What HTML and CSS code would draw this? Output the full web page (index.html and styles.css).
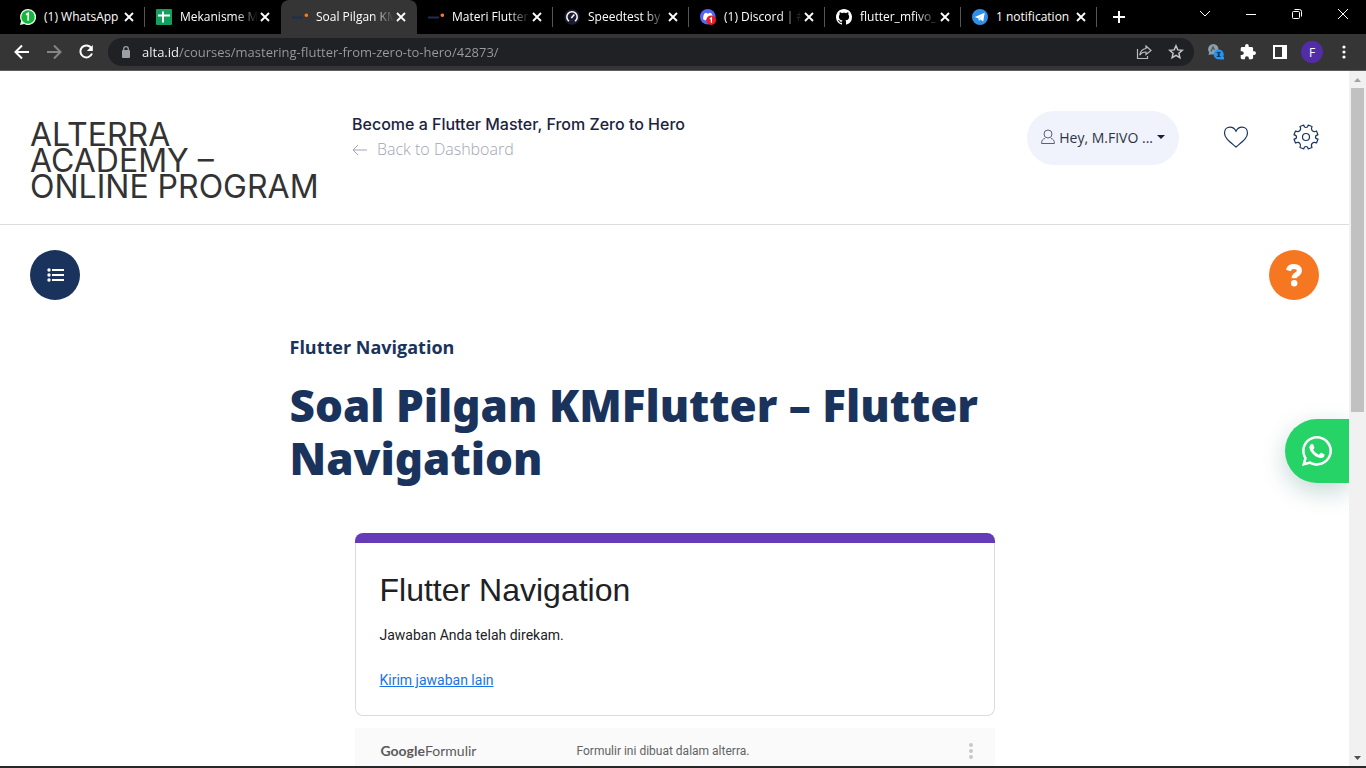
FILE: index.html
```html
<!DOCTYPE html>
<html lang="id">
<head>
<meta charset="utf-8">
<meta name="viewport" content="width=device-width, initial-scale=1">
<title>Soal Pilgan KMFlutter – Flutter Navigation</title>
<link rel="stylesheet" href="styles.css">
</head>
<body>
<svg class="defs" aria-hidden="true">
  <symbol id="close" viewBox="0 0 10 10"><path d="M1 1l8 8M9 1L1 9" stroke="currentColor" stroke-width="1.800"/></symbol>
  <symbol id="alta" viewBox="0 0 16 16"><path d="M0 8.500h11" stroke="#1d2f55" stroke-width="2"/><circle cx="14.300" cy="6.300" r="1.800" fill="#f47b2a"/></symbol>
</svg>
<nav class="tabs" aria-label="Tab">
  <div class="tab">
    <a href="#"><svg class="fav" viewBox="0 0 16 16"><path d="M8 0a8 8 0 1 1-3.800 15L0 16l1.100-4A8 8 0 0 1 8 0z" fill="#e8fbe9"/><circle cx="8" cy="8" r="6.700" fill="#12b83a"/><path d="M6 5.800l2.200-1.500v7.400" fill="none" stroke="#fff" stroke-width="1.700"/></svg><span class="label">(1) WhatsApp</span></a>
    <button class="x" aria-label="Tutup tab"><svg><use href="#close"/></svg></button>
  </div>
  <div class="tab">
    <a href="#"><svg class="fav" viewBox="0 0 16 16"><rect width="16" height="16" rx="1" fill="#12a15c"/><path d="M7 2.500v11M2 6.500h12" stroke="#fff" stroke-width="2"/></svg><span class="label fade">Mekanisme M</span></a>
    <button class="x" aria-label="Tutup tab"><svg><use href="#close"/></svg></button>
  </div>
  <div class="tab active">
    <a href="#" aria-current="page"><svg class="fav"><use href="#alta"/></svg><span class="label fade">Soal Pilgan KM</span></a>
    <button class="x" aria-label="Tutup tab"><svg><use href="#close"/></svg></button>
  </div>
  <div class="tab">
    <a href="#"><svg class="fav"><use href="#alta"/></svg><span class="label fade">Materi Flutter</span></a>
    <button class="x" aria-label="Tutup tab"><svg><use href="#close"/></svg></button>
  </div>
  <div class="tab">
    <a href="#"><svg class="fav" viewBox="0 0 16 16"><circle cx="8" cy="8" r="7.700" fill="#1b1c34"/><path d="M5 12.200a5.200 5.200 0 1 1 6 0" fill="none" stroke="#fff" stroke-width="1.500"/><path d="M7.300 9l3-3.500" stroke="#fff" stroke-width="1.500"/></svg><span class="label fade">Speedtest by</span></a>
    <button class="x" aria-label="Tutup tab"><svg><use href="#close"/></svg></button>
  </div>
  <div class="tab">
    <a href="#"><svg class="fav" viewBox="0 0 16 16"><circle cx="7.800" cy="7.800" r="7.800" fill="#5865f2"/><path d="M4.600 4.300l2-.6.5.8h1.800l.5-.8 2 .6c1.200 2 1.600 4 1.400 5.900l-2.200 1.200-.7-1H6.100l-.7 1-2.200-1.200C3 8.300 3.400 6.300 4.600 4.300z" fill="#fff"/><circle cx="11.200" cy="11.200" r="4.800" fill="#ed1c24"/><path d="M9.900 10l1.500-1.200v5" fill="none" stroke="#fff" stroke-width="1.300"/></svg><span class="label fade">(1) Discord | #</span></a>
    <button class="x" aria-label="Tutup tab"><svg><use href="#close"/></svg></button>
  </div>
  <div class="tab">
    <a href="#"><svg class="fav" viewBox="0 0 16 16"><path fill="#fff" d="M8 0C3.580 0 0 3.580 0 8c0 3.540 2.290 6.530 5.470 7.590.4.070.55-.17.55-.38 0-.19-.01-.82-.01-1.490-2.010.37-2.530-.49-2.690-.94-.09-.23-.48-.94-.82-1.130-.28-.15-.68-.52-.01-.53.63-.01 1.080.58 1.230.82.72 1.210 1.870.87 2.330.66.07-.52.28-.87.51-1.070-1.780-.2-3.640-.89-3.640-3.950 0-.87.31-1.590.82-2.150-.08-.2-.36-1.020.08-2.120 0 0 .67-.21 2.200.82.64-.18 1.320-.27 2-.27s1.360.09 2 .27c1.530-1.040 2.200-.82 2.200-.82.44 1.100.16 1.920.08 2.120.51.56.82 1.270.82 2.150 0 3.070-1.870 3.750-3.650 3.950.29.25.54.73.54 1.480 0 1.070-.01 1.930-.01 2.200 0 .21.15.46.55.38A8.010 8.010 0 0 0 16 8c0-4.420-3.580-8-8-8z"/></svg><span class="label fade">flutter_mfivo_</span></a>
    <button class="x" aria-label="Tutup tab"><svg><use href="#close"/></svg></button>
  </div>
  <div class="tab">
    <a href="#"><svg class="fav" viewBox="0 0 16 16"><circle cx="8" cy="8" r="8" fill="#2f8fe8"/><path d="M2.800 8L12.700 3.800 11.200 12.500 8.400 10.400 6.900 12 6.500 9.400z" fill="#fff"/><path d="M6.600 9.300l4-3.500-2.900 4" fill="#b7d8f5"/></svg><span class="label">1 notification</span></a>
    <button class="x" aria-label="Tutup tab"><svg><use href="#close"/></svg></button>
  </div>
  <button class="newtab" aria-label="Tab baru"><svg width="14" height="14" viewBox="0 0 14 14"><path d="M7 1v12M1 7h12" stroke="#fff" stroke-width="2"/></svg></button>
  <div class="window">
    <button aria-label="Cari tab"><svg width="12" height="8" viewBox="0 0 12 8"><path d="M1 1l5 5 5-5" fill="none" stroke="#fff"/></svg></button>
    <button aria-label="Minimalkan"><svg width="10" height="10" viewBox="0 0 10 10"><path d="M0 5.500h10" stroke="#fff"/></svg></button>
    <button aria-label="Pulihkan"><svg width="10" height="10" viewBox="0 0 10 10"><rect x=".5" y="2.500" width="7" height="7" rx="1" fill="none" stroke="#fff"/><path d="M2.500.5h5a2 2 0 0 1 2 2v5" fill="none" stroke="#fff"/></svg></button>
    <button aria-label="Tutup"><svg width="10" height="10" viewBox="0 0 10 10"><path d="M0 0l10 10M10 0L0 10" stroke="#fff"/></svg></button>
  </div>
</nav>
<div class="toolbar">
  <button aria-label="Kembali"><svg width="16" height="16" viewBox="0 0 16 16"><path d="M15 8H2M8 1.500L1.500 8 8 14.500" fill="none" stroke="#fff" stroke-width="2"/></svg></button>
  <button aria-label="Maju"><svg width="16" height="16" viewBox="0 0 16 16"><path d="M1 8h13M8 1.500L14.500 8 8 14.500" fill="none" stroke="#858585" stroke-width="2"/></svg></button>
  <button aria-label="Muat ulang"><svg width="16" height="16" viewBox="0 0 16 16"><path d="M13.300 4A6 6 0 1 0 14 9.500" fill="none" stroke="#fff" stroke-width="2"/><path d="M14.800 1v6H8.800z" fill="#fff"/></svg></button>
  <div class="address">
    <svg width="10" height="12" viewBox="0 0 10 12"><rect x="1" y="4" width="8" height="8" rx="1" fill="#9aa0a6"/><path d="M2.700 5V3a2.300 2.300 0 0 1 4.600 0v2" fill="none" stroke="#9aa0a6" stroke-width="1.300"/></svg>
    <input type="text" aria-label="Alamat" value="alta.id/courses/mastering-flutter-from-zero-to-hero/42873/">
    <button aria-label="Bagikan"><svg width="16" height="16" viewBox="0 0 16 16"><path d="M1.500 5v9.500h10V12" fill="none" stroke="#bbb" stroke-width="1.200"/><path d="M10 2l5 4.500-5 4V8C7 8 5 9 3.700 11.200 4.200 7.500 6.200 5 10 4.500z" fill="none" stroke="#bbb" stroke-width="1.200"/></svg></button>
    <button aria-label="Markah"><svg width="16" height="16" viewBox="0 0 16 16"><path d="M8 1.800l1.800 4.100 4.500.4-3.400 3 1 4.400L8 11.400l-3.900 2.300 1-4.400-3.400-3 4.500-.4z" fill="none" stroke="#c6c6c6" stroke-width="1.500"/></svg></button>
  </div>
  <button aria-label="Terjemahan"><svg width="16" height="16" viewBox="0 0 16 16"><circle cx="5.300" cy="5.300" r="5.200" fill="#8aa0ae"/><path d="M.5 11l1-4 3 3z" fill="#8aa0ae"/><path d="M3 7.500l2-4.500 1.500 3" fill="none" stroke="#41545f" stroke-width="1.200"/><circle cx="10.700" cy="10.500" r="5" fill="#2196f3"/><path d="M12 13h4v2.500h-4z" fill="#2196f3"/><path d="M8.700 8.500h4M8.700 12.500h4" stroke="#103a60" stroke-width="1.200"/><path d="M10.700 9v3" stroke="#103a60" stroke-width="2"/></svg></button>
  <button aria-label="Ekstensi"><svg width="16" height="16" viewBox="1 1 22 22"><path fill="#fff" d="M20.500 11H19V7c0-1.100-.9-2-2-2h-4V3.500a2.500 2.500 0 0 0-5 0V5H4c-1.100 0-2 .9-2 2v3.800h1.500a2.700 2.700 0 0 1 0 5.400H2V20c0 1.100.9 2 2 2h3.800v-1.500a2.700 2.700 0 0 1 5.400 0V22H17c1.100 0 2-.9 2-2v-4h1.500a2.500 2.500 0 0 0 0-5z"/></svg></button>
  <button aria-label="Panel samping"><svg width="16" height="16" viewBox="0 0 16 16"><path fill="#fff" fill-rule="evenodd" d="M1 1h14v14H1zM3 3v10h7V3z"/></svg></button>
  <button class="avatar" aria-label="Profil F">F</button>
  <button aria-label="Menu"><svg width="16" height="16" viewBox="0 0 16 16" fill="#fff"><circle cx="8" cy="3" r="1.600"/><circle cx="8" cy="8" r="1.600"/><circle cx="8" cy="13" r="1.600"/></svg></button>
</div>
<div class="viewport">
  <div class="page">
    <header class="header">
      <a class="logo" href="#">ALTERRA<br>ACADEMY –<br>ONLINE PROGRAM</a>
      <div class="course">
        <p class="course-name">Become a Flutter Master, From Zero to Hero</p>
        <a class="back" href="#"><svg width="15" height="12" viewBox="0 0 15 12"><path d="M15 6H1M6 1L1 6l5 5" fill="none" stroke="currentColor"/></svg>Back to Dashboard</a>
      </div>
      <button class="user"><svg width="14" height="16" viewBox="0 0 14 16" fill="none" stroke="#5a617d"><circle cx="7" cy="5" r="4"/><path d="M4 9.500C1.500 10 .6 11.500.6 14.500h12.800c0-3-1-4.500-3.400-5"/></svg>Hey, M.FIVO ... <svg width="8" height="4" viewBox="0 0 8 4"><path d="M0 0h8L4 4z" fill="#1a1f3c"/></svg></button>
      <button class="tool" aria-label="Favorit"><svg width="26" height="24" viewBox="0 0 26 24"><path d="M13 22C7 17 1.500 13.500 1.500 8c0-3.500 2.300-5.800 5.500-5.800 2.700 0 4.600 1.200 6 4 1.400-2.800 3.300-4 6-4 3.200 0 5.500 2.300 5.500 5.800 0 5.500-5.500 9-11.500 14z" fill="none" stroke="#1a335d" stroke-width="1.200"/></svg></button>
      <button class="tool" aria-label="Pengaturan"><svg width="26" height="26" viewBox="0 0 26 26" fill="none" stroke="#1a335d" stroke-width="1.200"><circle cx="13" cy="13" r="3.500"/><path d="M10.800 1Q11 3.500 13 3.500T15.200 1L19 2.500Q17.800 5 19.200 6.700T23.500 7L25 10.800Q22.500 11 22.500 13T25 15.200L23.500 19Q21 17.800 19.300 19.200T19 23.500L15.200 25Q15 22.500 13 22.500T10.800 25L7 23.500Q8.200 21 6.800 19.300T2.500 19L1 15.200Q3.500 15 3.500 13T1 10.800L2.500 7Q5 8.200 6.700 6.800T7 2.500z" stroke-linejoin="round"/></svg></button>
    </header>
    <main class="main">
      <div class="actions">
        <button class="round navy" aria-label="Daftar materi"><svg width="17" height="14" viewBox="0 0 17 14" fill="#fff"><circle cx="2" cy="2" r="1.700"/><circle cx="2" cy="7" r="1.700"/><circle cx="2" cy="12" r="1.700"/><path d="M5 1h12v2H5zM5 6h12v2H5zM5 11h12v2H5z"/></svg></button>
        <button class="round orange" aria-label="Bantuan"><svg width="16" height="24" viewBox="0 0 16 24"><path d="M2.300 7.500C3 5 5 3.500 8 3.500c3.300 0 5.400 1.500 5.400 4.200 0 3.800-5.300 3.500-5.300 7.600" fill="none" stroke="#fff" stroke-width="5"/><circle cx="8.200" cy="20.300" r="3.200" fill="#fff"/></svg></button>
      </div>
      <article class="lesson">
        <p class="topic">Flutter Navigation</p>
        <h1>Soal Pilgan KMFlutter – Flutter Navigation</h1>
        <div class="form">
          <section class="card">
            <div class="card-body">
              <h2>Flutter Navigation</h2>
              <p>Jawaban Anda telah direkam.</p>
              <a href="#">Kirim jawaban lain</a>
            </div>
          </section>
          <footer class="credit">
            <a class="google" href="#"><b>Google</b>Formulir</a>
            <span>Formulir ini dibuat dalam alterra.</span>
            <button aria-label="Opsi lain"><svg width="4" height="16" viewBox="0 0 4 16" fill="#c8c8c8"><circle cx="2" cy="2" r="2"/><circle cx="2" cy="8" r="2"/><circle cx="2" cy="14" r="2"/></svg></button>
          </footer>
        </div>
      </article>
    </main>
  </div>
  <a class="whatsapp" href="#" aria-label="WhatsApp"><svg width="30" height="30" viewBox="0 32 448 448"><path fill="#fff" d="M380.900 97.100C339 55.100 283.200 32 223.900 32c-122.400 0-222 99.600-222 222 0 39.100 10.200 77.300 29.600 111L0 480l117.700-30.900c32.400 17.700 68.900 27 106.100 27h.1c122.300 0 224.100-99.600 224.100-222 0-59.300-25.200-115-67.100-157zm-157 341.600c-33.200 0-65.700-8.900-94-25.700l-6.700-4-69.800 18.300L72 359.200l-4.400-7c-18.500-29.400-28.200-63.300-28.200-98.200 0-101.700 82.800-184.500 184.600-184.500 49.300 0 95.600 19.200 130.400 54.100 34.800 34.900 56.200 81.200 56.100 130.500 0 101.800-84.900 184.600-186.600 184.600zm101.200-138.200c-5.500-2.800-32.800-16.200-37.900-18-5.100-1.900-8.800-2.800-12.500 2.800-3.700 5.600-14.300 18-17.600 21.800-3.200 3.700-6.500 4.200-12 1.400-32.600-16.300-54-29.100-75.500-66-5.700-9.800 5.700-9.100 16.300-30.300 1.800-3.700.9-6.900-.5-9.700-1.400-2.800-12.500-30.100-17.100-41.200-4.500-10.800-9.100-9.300-12.500-9.500-3.200-.2-6.900-.2-10.600-.2-3.700 0-9.700 1.400-14.800 6.900-5.100 5.600-19.400 19-19.400 46.300 0 27.300 19.900 53.700 22.600 57.400 2.800 3.700 39.100 59.700 94.800 83.800 35.200 15.200 49 16.500 66.600 13.900 10.700-1.600 32.800-13.400 37.400-26.400 4.600-13 4.600-24.100 3.200-26.400-1.300-2.500-5-3.900-10.500-6.600z"/></svg></a>
  <div class="scroll" aria-hidden="true">
    <svg viewBox="0 0 17 17"><path d="M5 11h7l-3.500-4z" fill="#a3a3a3"/></svg>
    <div class="track"><div class="thumb"></div></div>
    <svg viewBox="0 0 17 17"><path d="M5 7h7l-3.500 4z" fill="#505050"/></svg>
  </div>
</div>
</body>
</html>
```
FILE: styles.css
```css
* { box-sizing: border-box; }
body {
  margin: 0;
  height: 100vh;
  display: flex;
  flex-direction: column;
  background: #fff;
  font-family: "Open Sans", sans-serif;
  border-bottom: 2px solid #28282a;
}
button { border: 0; padding: 0; background: none; font: inherit; color: inherit; display: flex; align-items: center; justify-content: center; }
a { color: inherit; text-decoration: none; }
p, h1, h2 { margin: 0; }
svg { flex: none; }
.defs { display: none; }

/* Tab strip */
.tabs { flex: none; display: flex; height: 34px; padding-left: 9px; background: #000; color: #fff; font-size: 12px; }
.tab { flex: 0 1 136px; min-width: 0; display: flex; align-items: center; gap: 2px; padding: 0 11px; background: linear-gradient(#555, #555) right center / 1px 20px no-repeat; }
.tab a { flex: 1; min-width: 0; display: flex; align-items: center; gap: 8px; }
.tab.active { background: #353535; border-radius: 8px 8px 0 0; }
.tab:has(+ .active) { background: none; }
.fav { width: 16px; height: 16px; }
.label { flex: 1; overflow: hidden; white-space: nowrap; line-height: 20px; }
.fade { -webkit-mask-image: linear-gradient(to right, #000 72%, transparent); mask-image: linear-gradient(to right, #000 72%, transparent); }
.x svg { width: 10px; height: 10px; }
.newtab { width: 44px; }
.window { display: flex; margin-left: auto; }
.window button { width: 46px; height: 28px; }

/* Toolbar */
.toolbar { flex: none; display: flex; align-items: center; gap: 16px; height: 37px; padding: 0 14px; background: #353535; border-bottom: 1px solid #5c5c5c; }
.address { flex: 1; display: flex; align-items: center; gap: 16px; height: 28px; margin: 0 -2px; padding: 0 10px 0 13px; border-radius: 14px; background: #202124; }
.address input {
  flex: 1; min-width: 0; border: 0; padding: 0; margin-left: -5px; outline: 0;
  font: 13px/20px "Open Sans", sans-serif; color: #9aa0a6;
  background: linear-gradient(to right, #fff 36px, #9a9c9e 36px);
  -webkit-background-clip: text; background-clip: text; -webkit-text-fill-color: transparent;
}
.avatar { width: 22px; height: 22px; border-radius: 50%; background: #512da8; color: #fff; font-size: 12px; margin: 0 -3px; }

/* Page frame */
.viewport { position: relative; flex: 1; min-height: 0; display: flex; }
.page { flex: 1; min-width: 0; overflow: hidden; }
.scroll { flex: none; width: 17px; display: flex; flex-direction: column; background: #f1f1f1; }
.scroll svg { width: 17px; height: 17px; }
.track { flex: 1; padding: 0 2px; }
.thumb { height: 49%; background: #c1c1c1; }

/* Site header */
.header { display: flex; align-items: flex-start; padding: 40px 30px 24px; border-bottom: 1px solid #ddd; color: #1c2340; }
.logo { flex: none; width: 322px; margin-top: 11px; font: 32px/26px Inter, sans-serif; color: #333; }
.course { flex: 1; }
.course-name { font: 500 16px/26px Inter, sans-serif; }
.back { display: flex; align-items: center; gap: 10px; font-size: 16px; line-height: 25px; font-weight: 300; color: #a2a5b3; }
.user { gap: 4px; height: 54px; padding: 0 14px 2px; border-radius: 27px; background: #f0f3fb; font-size: 14px; color: #2f3247; white-space: nowrap; }
.tool { width: 26px; height: 52px; margin-left: 44px; }

/* Lesson */
.main { padding: 25px 30px; }
.actions { display: flex; justify-content: space-between; }
.round { width: 50px; height: 50px; border-radius: 50%; }
.navy { background: #1a335d; }
.orange { background: #f57722; }
.lesson { max-width: 770px; margin: 35px auto 0; color: #1a335d; }
.topic { font-size: 18px; line-height: 24px; font-weight: 700; }
.lesson h1 { margin-top: 20px; font: 900 44px/53px "Noto Sans", sans-serif; }
.form { max-width: 640px; margin: 48px auto 0; font-family: Roboto, sans-serif; }
.card { border-top: 10px solid #673ab7; border-radius: 8px; color: #202124; font-size: 14px; line-height: 20px; }
.card-body { padding: 27px 24px 25px; border: 1px solid #dadce0; border-top: 0; border-radius: 0 0 8px 8px; }
.card h2 { font: 32px/40px "Liberation Sans", Arial, sans-serif; }
.card p { margin: 15px 0 25px; }
.card-body a { display: block; color: #1a73e8; text-decoration: underline; }
.credit { display: flex; align-items: center; margin-top: 12px; padding: 13px 22px 25px 26px; background: #fafafa; font-size: 12px; line-height: 20px; color: #636363; }
.credit span { flex: 1; }
.google { width: 196px; font: 14px/20px Lato, sans-serif; color: #5a5a5a; }

/* Floating chat button */
.whatsapp { position: absolute; top: 50%; right: 17px; width: 64px; height: 64px; display: flex; align-items: center; justify-content: center; border-radius: 32px 0 0 32px; background: #25d366; box-shadow: 0 8px 24px rgba(7, 94, 84, .24); clip-path: inset(-50px 0 -50px -50px); }
```
